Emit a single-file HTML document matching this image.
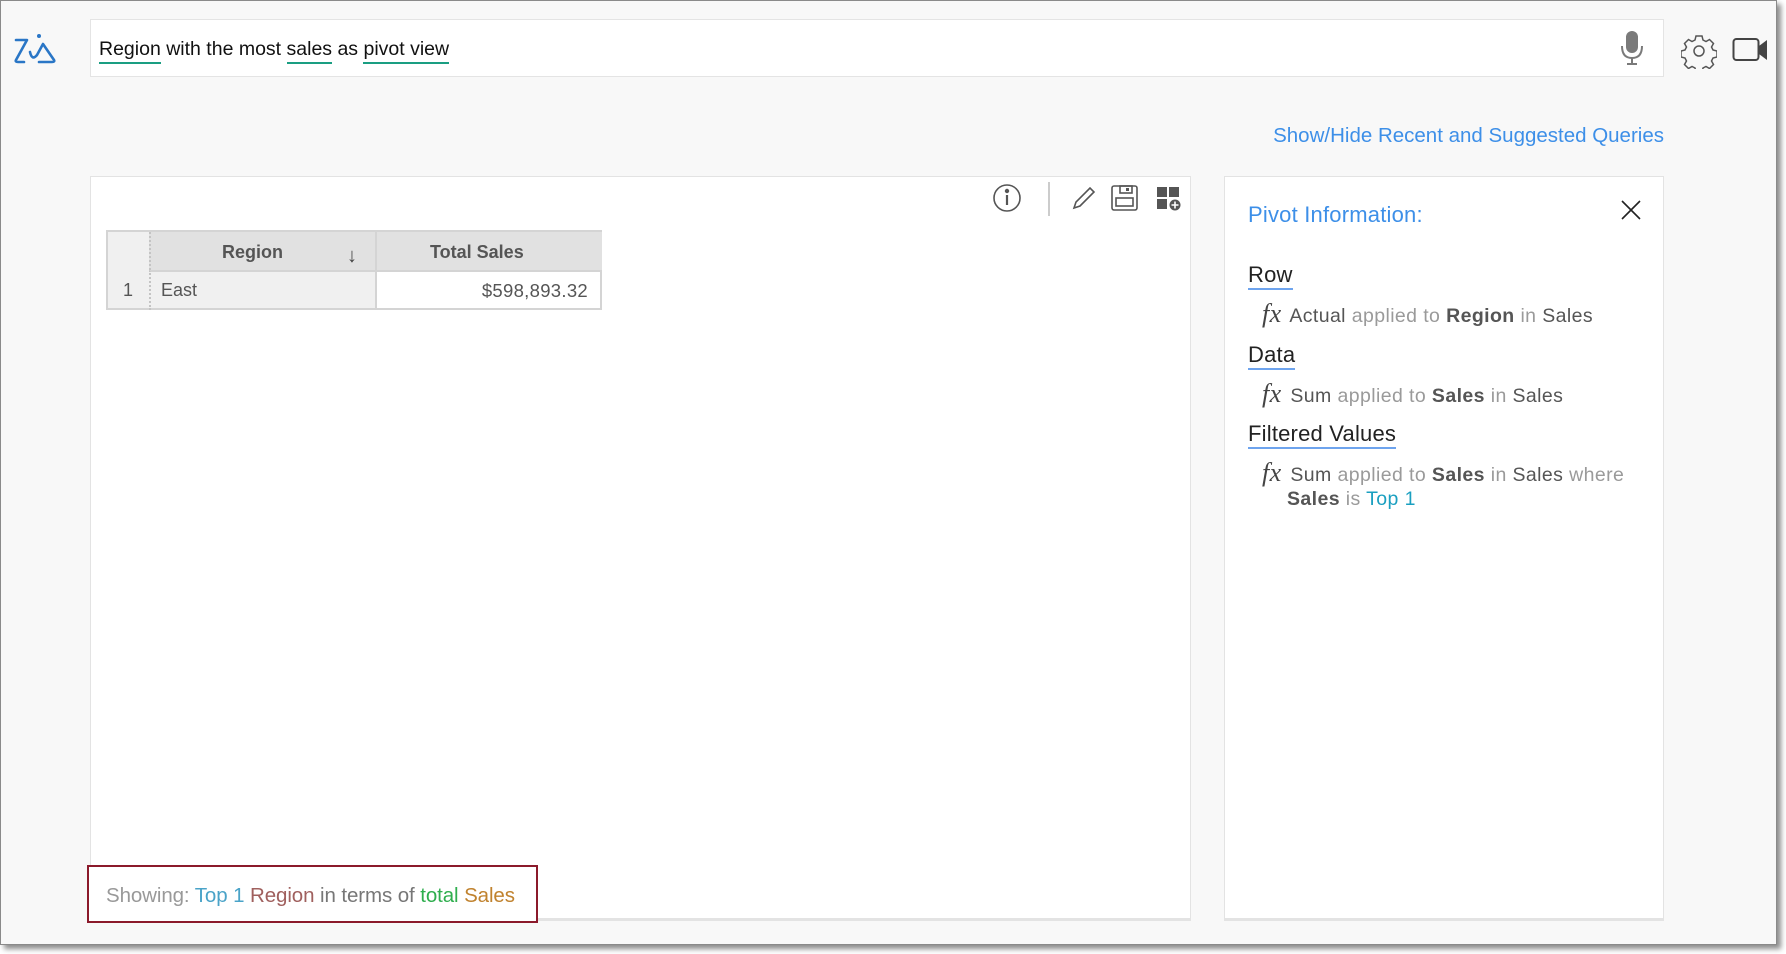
<!DOCTYPE html>
<html><head><meta charset="utf-8"><style>
body{margin:0;width:1786px;height:954px;background:#fff;font-family:"Liberation Sans",Arial,sans-serif;position:relative;overflow:hidden}
.a{position:absolute}
#frame{left:0;top:0;width:1775px;height:943px;border:1px solid #8a8a8a;background:#f8f8f8;box-shadow:4px 4px 5px rgba(0,0,0,.45)}
.t{white-space:nowrap}
.u{border-bottom:2px solid #1a9e82;padding-bottom:2px}
.lbl{font-size:22px;color:#222;border-bottom:2px solid #6ea4ee;padding-bottom:1px}
.fx{font-family:"Liberation Serif",serif;font-style:italic;font-size:26px;color:#444;margin-right:3px}
.ln{font-size:19.5px;color:#555;letter-spacing:0.4px}
.g{color:#9a9a9a}
b{color:#555}
</style></head><body>
<div class="a" id="frame"></div>
<!-- logo -->
<svg class="a" style="left:13px;top:31px" width="46" height="34" viewBox="0 0 46 34" fill="none" stroke="#2a76c6" stroke-width="2.6" stroke-linecap="round" stroke-linejoin="round">
<path d="M3 9 L14 9 L3 29 Q2 31 5 31 L11 31"/>
<path d="M17 21 Q19 30 24 24 L30 13 L41 29 Q42 31 39 31 L26 31"/>
<circle cx="26" cy="5" r="2" fill="#2a76c6" stroke="none"/>
</svg>
<!-- search -->
<div class="a" style="left:90px;top:19px;width:1572px;height:56px;background:#fff;border:1px solid #e4e4e4"></div>
<div class="a t" style="left:99px;top:38px;font-size:19.5px;letter-spacing:0;color:#111"><span class="u">Region</span> with the most <span class="u">sales</span> as <span class="u">pivot view</span></div>
<svg class="a" style="left:1620px;top:30px" width="24" height="36" viewBox="0 0 24 36"><rect x="6" y="1" width="12" height="22" rx="6" fill="#7a7a7a"/><path d="M2 16 Q2 28 12 28 Q22 28 22 16" stroke="#7a7a7a" stroke-width="2" fill="none"/><path d="M12 28 V34 M7 34 H17" stroke="#7a7a7a" stroke-width="2"/></svg>
<svg class="a" style="left:1681px;top:33px" width="36" height="36" viewBox="0 0 36 36" fill="none" stroke="#555" stroke-width="1.5"><path d="M15 3h6l1 4 3 1.5 3.5-2 4 4-2 3.5 1.5 3 4 1v6l-4 1-1.5 3 2 3.5-4 4-3.5-2-3 1.5-1 4h-6l-1-4-3-1.5-3.5 2-4-4 2-3.5-1.5-3-4-1v-6l4-1 1.5-3-2-3.5 4-4 3.5 2 3-1.5z"/><circle cx="18" cy="18" r="5"/></svg>
<svg class="a" style="left:1732px;top:37px" width="38" height="26" viewBox="0 0 38 26"><rect x="1.5" y="2" width="25" height="21" rx="3" fill="none" stroke="#444" stroke-width="2"/><path d="M27 9 L35 3 V23 L27 17z" fill="#444"/></svg>
<div class="a t" style="right:122px;top:124px;font-size:20.5px;letter-spacing:0;color:#3d8fe8">Show/Hide Recent and Suggested Queries</div>
<!-- main panel -->
<div class="a" style="left:90px;top:176px;width:1099px;height:741px;background:#fff;border:1px solid #e3e3e3;border-bottom:3px solid #e3e3e3"></div>
<svg class="a" style="left:990px;top:182px" width="200" height="34" viewBox="0 0 200 34" fill="none" stroke="#555" stroke-width="1.6">
<circle cx="17" cy="16" r="13"/><path d="M17 13v10" stroke-width="2.2"/><circle cx="17" cy="9" r="1.4" fill="#555"/>
<path d="M59 0V34" stroke="#ccc" stroke-width="2"/>
<path d="M84 26 L86 20 L100 6 L104 10 L90 24z M84 26 L90 24"/>
<rect x="122" y="4" width="25" height="24" rx="2"/><rect x="126" y="16" width="17" height="8"/><rect x="130" y="4" width="12" height="7"/><rect x="136" y="6" width="3" height="3" fill="#555" stroke="none"/>
<g fill="#555" stroke="none"><rect x="167" y="5" width="10" height="10"/><rect x="179" y="5" width="10" height="10"/><rect x="167" y="17" width="10" height="10"/><circle cx="185" cy="23" r="5.5"/></g>
<path d="M185 19.5v7M181.5 23h7" stroke="#fff" stroke-width="1.6"/>
</svg>
<!-- table -->
<div class="a" style="left:106px;top:230px;width:492px;height:76px;border:2px solid #d4d4d4;background:#f0f0f0"></div>
<div class="a" style="left:149px;top:232px;width:226px;height:38px;background:#e1e1e1;border-left:2px dotted #c4c4c4"></div>
<div class="a" style="left:149px;top:270px;width:226px;height:38px;border-left:2px dotted #c4c4c4;border-top:2px solid #d4d4d4"></div>
<div class="a" style="left:375px;top:232px;width:225px;height:38px;background:#e1e1e1;border-left:2px solid #d4d4d4"></div>
<div class="a" style="left:375px;top:270px;width:223px;height:36px;background:#fff;border-left:2px solid #d4d4d4;border-top:2px solid #d4d4d4"></div>
<div class="a t" style="left:222px;top:242px;font-size:18px;font-weight:bold;color:#555">Region</div>
<div class="a t" style="left:347px;top:245px;font-size:20px;font-weight:bold;color:#444">↓</div>
<div class="a t" style="left:430px;top:242px;font-size:18px;font-weight:bold;color:#555">Total Sales</div>
<div class="a t" style="left:123px;top:280px;font-size:18px;color:#555">1</div>
<div class="a t" style="left:161px;top:280px;font-size:18px;color:#555">East</div>
<div class="a t" style="right:1198px;top:280px;font-size:18.5px;letter-spacing:0.3px;color:#555">$598,893.32</div>
<!-- footer -->
<div class="a" style="left:87px;top:865px;width:447px;height:54px;border:2px solid #8b1a2b;background:#fff"></div>
<div class="a t" style="left:106px;top:884px;font-size:20.5px;letter-spacing:-0.1px;color:#999">Showing: <span style="color:#4aa3c8">Top 1</span> <span style="color:#a0605e">Region</span> <span style="color:#777">in terms of</span> <span style="color:#2fae4e">total</span> <span style="color:#c0822e">Sales</span></div>
<!-- right panel -->
<div class="a" style="left:1224px;top:176px;width:438px;height:741px;background:#fff;border:1px solid #e3e3e3;border-bottom:3px solid #e3e3e3"></div>
<div class="a t" style="left:1248px;top:202px;font-size:22px;letter-spacing:0.2px;color:#3d8fe8">Pivot Information:</div>
<svg class="a" style="left:1621px;top:200px" width="20" height="20" viewBox="0 0 20 20" stroke="#222" stroke-width="1.6"><path d="M1 1L19 19M19 1L1 19"/></svg>
<div class="a t" style="left:1248px;top:262px;letter-spacing:0.2px"><span class="lbl">Row</span></div>
<div class="a t ln" style="left:1262px;top:299px"><span class="fx">fx</span> Actual <span class="g">applied to</span> <b>Region</b> <span class="g">in</span> Sales</div>
<div class="a t" style="left:1248px;top:342px;letter-spacing:0.2px"><span class="lbl">Data</span></div>
<div class="a t ln" style="left:1262px;top:379px"><span class="fx">fx</span> Sum <span class="g">applied to</span> <b>Sales</b> <span class="g">in</span> Sales</div>
<div class="a t" style="left:1248px;top:421px;letter-spacing:0.2px"><span class="lbl">Filtered Values</span></div>
<div class="a t ln" style="left:1262px;top:458px"><span class="fx">fx</span> Sum <span class="g">applied to</span> <b>Sales</b> <span class="g">in</span> Sales <span class="g">where</span></div>
<div class="a t ln" style="left:1287px;top:488px"><b>Sales</b> <span class="g">is</span> <span style="color:#1a9fc0">Top 1</span></div>
</body></html>
